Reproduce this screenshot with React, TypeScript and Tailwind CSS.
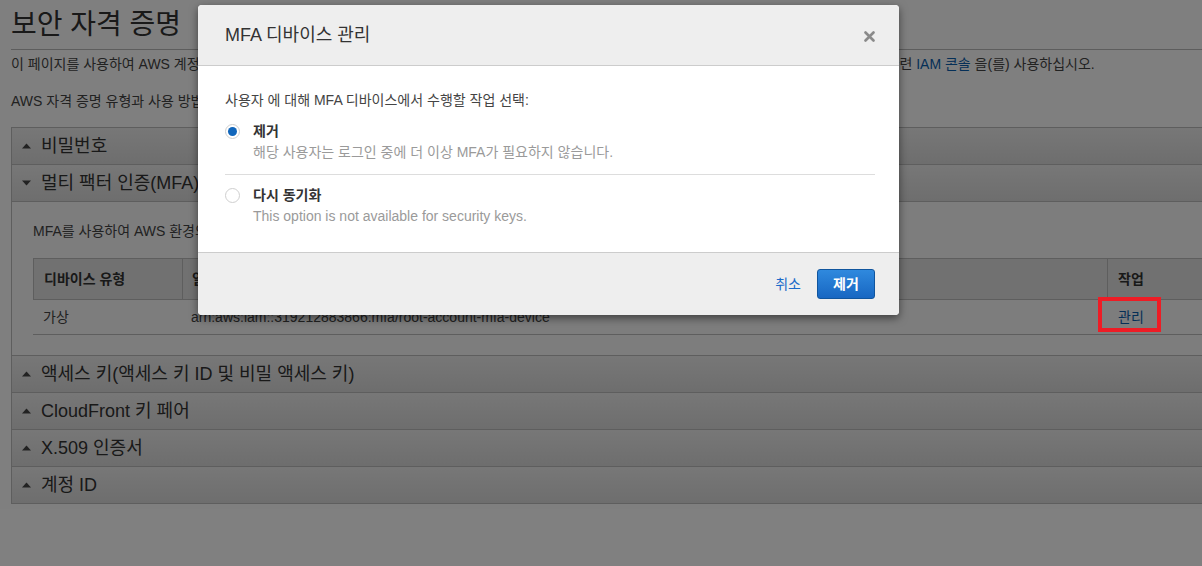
import React from 'react';

const Caret: React.FC<{ open?: boolean }> = ({ open }) => (
  <svg width="9" height="6" viewBox="0 0 9 6" className="shrink-0">
    {open ? <path d="M0 0.5h9L4.5 5.5z" fill="#444" /> : <path d="M0 5.5h9L4.5 0.5z" fill="#444" />}
  </svg>
);

const SectionHeader: React.FC<{ title: string; open?: boolean }> = ({ title, open }) => (
  <div className="h-[37px] flex items-center gap-[10px] pl-[10px] border-b border-[#bdbdbd] bg-gradient-to-b from-[#efefef] to-[#dcdcdc] text-[18px] text-[#333]">
    <Caret open={open} />
    <span>{title}</span>
  </div>
);

const Radio: React.FC<{ checked?: boolean }> = ({ checked }) => (
  <div className="w-[15px] h-[15px] rounded-full border border-[#cfcfcf] bg-white flex items-center justify-center shrink-0">
    {checked && <div className="w-[9px] h-[9px] rounded-full bg-[#1166bb]"></div>}
  </div>
);

const App: React.FC = () => {
  return (
    <div className="relative w-[1202px] h-[566px] overflow-hidden bg-white font-['Liberation_Sans','Noto_Sans_CJK_KR',sans-serif] text-[#333]">
      {/* page behind the dialog */}
      <div className="pl-[11px] w-[1240px]">
        <h1 className="text-[28px] leading-[34px] pt-[8px] pb-[7px] border-b border-[#bbb] text-[#333]">보안 자격 증명</h1>
        <p className="mt-[4px] text-[14px] leading-[20px] text-[#444] whitespace-nowrap">
          이 페이지를 사용하여 AWS 계정의 자격 증명을 관리합니다. AWS Identity and Access Management (IAM) 사용자 및 그룹의 자격 증명을 관리하려면 관련 <span className="text-[#0b5fae]">IAM 콘솔</span> 을(를) 사용하십시오.
        </p>
        <p className="mt-[17px] text-[14px] leading-[20px] text-[#444] whitespace-nowrap">
          AWS 자격 증명 유형과 사용 방법에 대해 자세히 알아보려면 AWS 일반 참조의 AWS 보안 자격 증명을 참조하십시오.
        </p>

        <div className="mt-[16px] border border-b-0 border-[#bdbdbd] w-[1225px]">
          <SectionHeader title="비밀번호" />
          <SectionHeader title="멀티 팩터 인증(MFA)" open />
          <div className="bg-[#fafafa] pl-[21px] pt-[19px] pb-[20px] border-b border-[#bdbdbd]">
            <p className="text-[14px] leading-[20px] text-[#444] whitespace-nowrap">
              MFA를 사용하여 AWS 환경의 보안을 강화합니다. MFA 보호 계정에 로그인하려면 사용자 이름, 암호 및 MFA 디바이스의 인증 코드가 필요합니다.
            </p>
            <div className="mt-[17px] text-[14px]">
              <div className="grid grid-cols-[149px_925px_140px] h-[42px] border border-[#bdbdbd] bg-[#e3e3e3] font-bold text-[#333]">
                <div className="flex items-center pl-[10px] border-r border-[#bdbdbd]">디바이스 유형</div>
                <div className="flex items-center pl-[9px] border-r border-[#bdbdbd]">일련 번호</div>
                <div className="flex items-center pl-[10px]">작업</div>
              </div>
              <div className="grid grid-cols-[149px_925px_140px] h-[35px] border-b border-[#bdbdbd] text-[#444]">
                <div className="flex items-center pl-[10px]">가상</div>
                <div className="flex items-center pl-[9px]">arn:aws:iam::319212883866:mfa/root-account-mfa-device</div>
                <div className="flex items-center pl-[11px] text-[#0b5fae]">관리</div>
              </div>
            </div>
          </div>
          <SectionHeader title="액세스 키(액세스 키 ID 및 비밀 액세스 키)" />
          <SectionHeader title="CloudFront 키 페어" />
          <SectionHeader title="X.509 인증서" />
          <SectionHeader title="계정 ID" />
        </div>
      </div>

      {/* backdrop */}
      <div className="absolute inset-0 bg-black/50"></div>

      {/* annotation */}
      <div className="absolute left-[1098px] top-[297px] w-[63px] h-[35px] border-[4px] border-[#ee1c25]"></div>

      {/* dialog */}
      <div className="absolute left-[198px] top-[5px] w-[701px] rounded-[4px] overflow-hidden bg-white shadow-[0_3px_9px_rgba(0,0,0,0.5)]">
        <div className="h-[61px] flex items-center justify-between pl-[27px] pr-[24px] bg-[#eeeeee] border-b border-[#cccccc]">
          <h2 className="text-[18px] text-[#333]">MFA 디바이스 관리</h2>
          <svg width="11" height="11" viewBox="0 0 11 11" className="mt-[2px]">
            <path d="M1.5 1.5l8 8M9.5 1.5l-8 8" stroke="#8a8a8a" strokeWidth="2.6" strokeLinecap="round" />
          </svg>
        </div>
        <div className="pl-[27px] pr-[24px] pt-[24px] pb-[26px] text-[14px] leading-[20px]">
          <p className="text-[#444]">사용자 에 대해 MFA 디바이스에서 수행할 작업 선택:</p>
          <div className="mt-[11px] flex gap-[13px]">
            <div className="pt-[3px]"><Radio checked /></div>
            <div>
              <div className="font-bold text-[#333]">제거</div>
              <div className="mt-[1px] text-[#9a9a9a]">해당 사용자는 로그인 중에 더 이상 MFA가 필요하지 않습니다.</div>
            </div>
          </div>
          <div className="mt-[12px] border-t border-[#dddddd]"></div>
          <div className="mt-[10px] flex gap-[13px]">
            <div className="pt-[3px]"><Radio /></div>
            <div>
              <div className="font-bold text-[#333]">다시 동기화</div>
              <div className="mt-[1px] text-[#9a9a9a]">This option is not available for security keys.</div>
            </div>
          </div>
        </div>
        <div className="h-[63px] flex items-center justify-end gap-[16px] pr-[24px] bg-[#eeeeee] border-t border-[#cccccc] text-[14px]">
          <span className="text-[#1b6ac9]">취소</span>
          <button className="w-[58px] h-[30px] rounded-[3px] border border-[#10559e] bg-gradient-to-b from-[#2f89de] to-[#1867c2] text-white font-bold">제거</button>
        </div>
      </div>
    </div>
  );
};

export default App;
